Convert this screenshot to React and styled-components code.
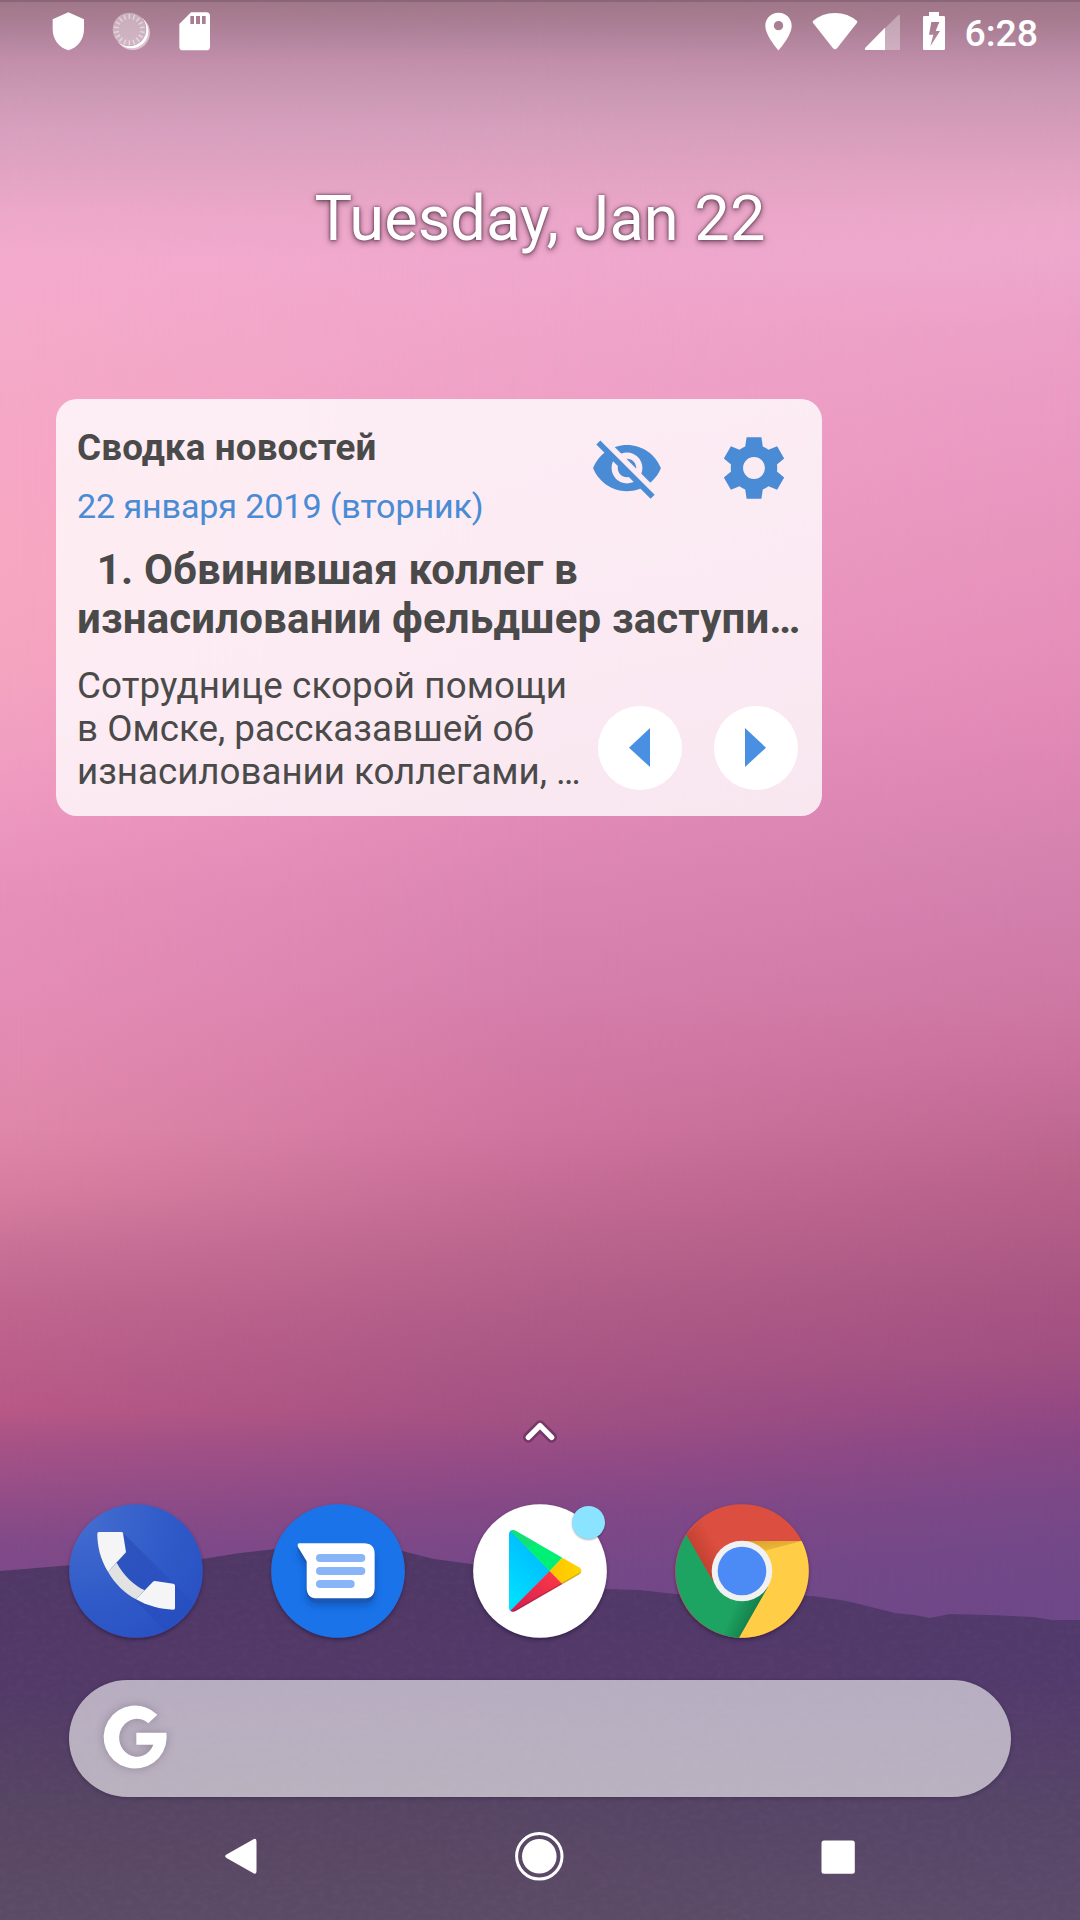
import React from 'react';
import styled, { createGlobalStyle } from 'styled-components';

const GlobalStyle = createGlobalStyle`
  html, body { margin: 0; padding: 0; }
  body { font-family: Roboto, "Noto Sans", sans-serif; overflow: hidden; }
  svg { display: block; flex: none; }
  button { border: 0; padding: 0; background: none; display: flex; align-items: center; justify-content: center; }
`;

const Phone = styled.div`
  display: grid;
  grid-template: 1920px / 1080px;
  width: 1080px;
  height: 1920px;
  overflow: hidden;
`;

const WallpaperArt = styled.svg`
  grid-area: 1 / 1;
`;

const Screen = styled.div`
  grid-area: 1 / 1;
  display: flex;
  flex-direction: column;
  isolation: isolate;
`;

const StatusBar = styled.header`
  display: flex;
  justify-content: space-between;
  align-items: flex-start;
  height: 60px;
  padding: 12px 42px 0 52px;
`;

const StatusGroup = styled.div`
  display: flex;
  align-items: flex-start;
`;

const StatusIcon = styled.svg`
  width: ${(p) => p.$w}px;
  height: 39px;
  margin-right: ${(p) => p.$gap || 0}px;
  fill: #fff;
`;

const Clock = styled.span`
  font-size: 37.5px;
  line-height: 43px;
  font-weight: 500;
  letter-spacing: -0.1px;
  color: #fff;
`;

const DateWidget = styled.h1`
  margin: 109px 0 0;
  text-align: center;
  font-size: 63.2px;
  line-height: 74px;
  font-weight: 400;
  color: #fff;
  text-shadow: 0 0 3px rgba(40, 10, 30, 0.7), 0 2px 6px rgba(40, 10, 30, 0.6);
`;

const NewsCard = styled.section`
  box-sizing: border-box;
  width: 766px;
  height: 417px;
  margin: 144px 0 0 56px;
  padding: 27px 0 0 21px;
  border-radius: 21px;
  background: rgba(255, 255, 255, 0.8);
  color: #4a4a4a;
  white-space: nowrap;
`;

const CardHeader = styled.div`
  display: flex;
  justify-content: space-between;
  padding-right: 31px;
`;

const CardTitle = styled.h2`
  margin: 0 0 17px;
  font-size: 36.75px;
  line-height: 43px;
  font-weight: 700;
  letter-spacing: 0.16px;
`;

const CardDate = styled.p`
  margin: 0;
  font-size: 34.125px;
  line-height: 40px;
  letter-spacing: -0.13px;
  color: #4a8bd5;
`;

const CardTools = styled.div`
  display: flex;
  gap: 53px;
  padding-top: 5px;
`;

const ToolIcon = styled.svg`
  width: 74px;
  height: 74px;
  fill: #4a8bd5;
`;

const Headline = styled.h3`
  margin: 19px 0 21px;
  font-size: 42px;
  line-height: 49px;
  font-weight: 700;
  letter-spacing: 0.16px;
  white-space: pre;
`;

const Indent = styled.span`
  letter-spacing: -0.6px;
`;

const CardFooter = styled.div`
  display: flex;
  justify-content: space-between;
  align-items: flex-end;
  padding-right: 24px;
`;

const Summary = styled.p`
  margin: 0;
  font-size: 36.75px;
  line-height: 43px;
`;

const SummaryLine = styled.span`
  display: block;
  letter-spacing: ${(p) => p.$track || 0}px;
`;

const Pager = styled.div`
  display: flex;
  gap: 32px;
  padding-bottom: 3px;
`;

const PagerButton = styled.button`
  width: 84px;
  height: 84px;
  border-radius: 50%;
  background: #fff;
`;

const DrawerHandle = styled.div`
  display: flex;
  justify-content: center;
  margin-top: auto;
  padding-bottom: 58px;
`;

const Dock = styled.nav`
  display: flex;
  gap: 68px;
  padding-left: 69px;
`;

const AppIcon = styled.div`
  position: relative;
  width: 134px;
  height: 134px;
  border-radius: 50%;
  box-shadow: 0 2px 4px -1px rgba(20, 10, 40, 0.6);
`;

const Badge = styled.span`
  position: absolute;
  left: 98.5px;
  top: 2px;
  width: 33px;
  height: 33px;
  border-radius: 50%;
  background: #8ae3ff;
  box-shadow: 0 1px 2px rgba(0, 0, 0, 0.3);
`;

const SearchBar = styled.div`
  box-sizing: border-box;
  display: flex;
  align-items: center;
  width: 942px;
  height: 117px;
  margin: 42px 0 0 69px;
  padding: 0 0 1px 31px;
  border-radius: 59px;
  background: rgba(255, 255, 255, 0.59);
  box-shadow: 0 1px 4px rgba(20, 10, 40, 0.3);
`;

const GoogleMark = styled.svg`
  filter: drop-shadow(0 0 5px rgba(80, 60, 90, 0.35));
`;

const NavBar = styled.nav`
  box-sizing: border-box;
  display: flex;
  justify-content: center;
  align-items: center;
  gap: 250px;
  height: 123px;
  padding: 0 2px 4px 0;
`;

const NavButton = styled.button`
  width: 49px;
  height: 49px;
`;

const leftSky = [
  [0, '#9f7789'], [20, '#a97d92'], [40, '#b4869f'], [60, '#c28ea9'], [90, '#ca98b3'], [130, '#d7a0be'],
  [170, '#e1a3c1'], [210, '#eca8c9'], [260, '#f3aacd'], [330, '#f4aac9'], [420, '#f5a7c5'], [560, '#f7a7c1'],
  [660, '#f5a4bf'], [740, '#f19fc1'], [820, '#ec97bf'], [900, '#e690b9'], [990, '#e48db6'], [1060, '#e38ab0'],
  [1130, '#df87a9'], [1190, '#d77ea0'], [1250, '#c97096'], [1310, '#bf658e'], [1380, '#b95c88'],
  [1410, '#b85886'], [1440, '#a85386'], [1490, '#964e87'], [1540, '#824a88'], [1620, '#774888'],
];
const middleSky = [
  [0, '#9f7789'], [20, '#a97d92'], [40, '#b4869f'], [60, '#c28ea9'], [90, '#ca98b3'], [130, '#d7a0be'],
  [170, '#e1a3c1'], [210, '#eaa6c8'], [260, '#f0a8ce'], [330, '#f0a4c9'], [420, '#efa0c6'], [560, '#ed9bc3'],
  [700, '#e993bf'], [820, '#e18ab7'], [900, '#db85b2'], [980, '#d680ad'], [1060, '#d379a5'], [1130, '#cf749f'],
  [1180, '#c76d97'], [1240, '#bb668e'], [1310, '#b05d88'], [1370, '#a85685'], [1420, '#a15183'],
  [1460, '#944b86'], [1510, '#834887'], [1570, '#764888'], [1620, '#724888'],
];
const rightSky = [
  [0, '#9f7789'], [20, '#a67b8f'], [40, '#b1849d'], [60, '#be8ca8'], [90, '#c897b2'], [130, '#d69cba'],
  [170, '#e2a2c2'], [215, '#eba8c9'], [260, '#eda7cc'], [330, '#ec9fc6'], [430, '#ea9ac2'], [540, '#e794bd'],
  [640, '#e58fb9'], [720, '#e28ab6'], [770, '#de86b3'], [840, '#d683b0'], [920, '#d17dab'], [1000, '#cd78a3'],
  [1060, '#c9719c'], [1110, '#c16b95'], [1170, '#b9638b'], [1240, '#af5b86'], [1300, '#a75483'],
  [1360, '#9f4f81'], [1400, '#964983'], [1440, '#894785'], [1500, '#7a4887'], [1560, '#714888'], [1620, '#6e4888'],
];

const RIDGE =
  'M0 1571 L48 1567 L72 1565 L130 1563 L202 1559 L240 1553 L275 1549 L300 1545 L340 1541 L380 1544 L406 1552 L434 1559 L472 1564 L540 1577 L606 1589 L640 1590 L675 1594 L740 1594 L813 1596 L847 1601 L875 1608 L895 1613 L915 1615 L930 1618 L950 1614 L990 1615 L1033 1617 L1052 1620 L1080 1620 V1920 H0Z';

function SkyGradient({ id, stops }) {
  return (
    <linearGradient id={id} x1="0" y1="0" x2="0" y2="1620" gradientUnits="userSpaceOnUse">
      {stops.map(([y, c]) => <stop key={y} offset={y / 1620} stopColor={c} />)}
    </linearGradient>
  );
}

function Wallpaper() {
  return (
    <WallpaperArt width="1080" height="1920" viewBox="0 0 1080 1920" aria-hidden="true">
      <defs>
        <SkyGradient id="skyL" stops={leftSky} />
        <SkyGradient id="skyM" stops={middleSky} />
        <SkyGradient id="skyR" stops={rightSky} />
        <linearGradient id="fadeL">
          <stop offset="0" stopColor="#fff" />
          <stop offset="0.25" stopColor="#8c8c8c" />
          <stop offset="0.5" stopColor="#000" />
        </linearGradient>
        <linearGradient id="fadeR">
          <stop offset="0.5" stopColor="#000" />
          <stop offset="1" stopColor="#fff" />
        </linearGradient>
        <mask id="maskL"><rect width="1080" height="1920" fill="url(#fadeL)" /></mask>
        <mask id="maskR"><rect width="1080" height="1920" fill="url(#fadeR)" /></mask>
        <linearGradient id="hill" x1="0" y1="1540" x2="0" y2="1920" gradientUnits="userSpaceOnUse">
          <stop offset="0" stopColor="#4f3765" />
          <stop offset="0.37" stopColor="#523968" />
          <stop offset="0.68" stopColor="#564463" />
          <stop offset="1" stopColor="#5c4b65" />
        </linearGradient>
        <linearGradient id="hillTint">
          <stop offset="0.4" stopColor="#58449a" stopOpacity="0" />
          <stop offset="1" stopColor="#58449a" stopOpacity="0.09" />
        </linearGradient>
        <filter id="grain" x="0" y="0" width="100%" height="100%">
          <feTurbulence type="fractalNoise" baseFrequency="0.12 0.2" numOctaves="3" seed="4" />
          <feColorMatrix values="0 0 0 0 0.6  0 0 0 0 0.42  0 0 0 0 0.7  0.55 0 0 0 -0.2" />
        </filter>
        <clipPath id="hillClip"><path d={RIDGE} /></clipPath>
      </defs>
      <rect width="1080" height="1920" fill="url(#skyM)" />
      <rect width="1080" height="1920" fill="url(#skyL)" mask="url(#maskL)" />
      <rect width="1080" height="1920" fill="url(#skyR)" mask="url(#maskR)" />
      <rect width="1080" height="2" fill="#7d5a6c" opacity="0.6" />
      <path d={RIDGE} fill="url(#hill)" />
      <path d={RIDGE} fill="url(#hillTint)" />
      <g clipPath="url(#hillClip)">
        <rect y="1530" width="1080" height="390" filter="url(#grain)" opacity="0.14" />
      </g>
    </WallpaperArt>
  );
}

function SpinnerTicks() {
  return Array.from({ length: 18 }, (_, i) => (
    <path
      key={i}
      d="M388 42V57"
      stroke="#fff"
      strokeWidth="4.5"
      opacity="0.45"
      transform={`rotate(${i * 20} 388 89)`}
    />
  ));
}

function Status() {
  return (
    <StatusBar>
      <StatusGroup>
        <StatusIcon $w={33} $gap={27} viewBox="156 36 99 117">
          <path d="M205 37 L252 58 V88 C252 118 232 144 205 151 C178 144 158 118 158 88 V58Z" />
        </StatusIcon>
        <StatusIcon $w={38} $gap={29} viewBox="336 36 114 117">
          <mask id="crescent">
            <rect x="330" y="30" width="130" height="130" fill="#fff" />
            <circle cx="388" cy="88" r="51" fill="#000" />
          </mask>
          <circle cx="398" cy="98" r="52" opacity="0.5" mask="url(#crescent)" />
          <circle cx="394" cy="94" r="51" mask="url(#crescent)" />
          <circle cx="388" cy="88" r="50" opacity="0.38" />
          <SpinnerTicks />
        </StatusIcon>
        <StatusIcon $w={31} viewBox="537 36 93 117">
          <path
            fillRule="evenodd"
            d="M573 37 H619 Q630 37 630 48 V140 Q630 151 619 151 H549 Q538 151 538 140 V72Z M571 48 V72 H582 V48Z M588 48 V72 H600 V48Z M606 48 V72 H617 V48Z"
          />
        </StatusIcon>
      </StatusGroup>
      <StatusGroup>
        <StatusIcon $w={27} $gap={20} viewBox="135 36 81 117">
          <path
            fillRule="evenodd"
            d="M175.500 38 C153 38 136 55 136 77 C136 107 175.500 151 175.500 151 C175.500 151 215 107 215 77 C215 55 198 38 175.500 38Z M175.500 63 A14 14 0 1 1 175.500 91 A14 14 0 1 1 175.500 63Z"
          />
        </StatusIcon>
        <StatusIcon $w={46} $gap={6} viewBox="276 36 138 117">
          <path d="M278 64 Q306 39 345 39 Q384 39 412 64 Q412 67 410 70 L351 145 Q345 151 339 145 L280 70 Q278 67 278 64Z" />
        </StatusIcon>
        <StatusIcon $w={36} $gap={22} viewBox="432 36 108 117">
          <path opacity="0.32" d="M495 85 L533 47 Q540 41 540 50 V150 H495Z" />
          <path d="M495 83 V150 H438 Q432 149 436 143Z" />
        </StatusIcon>
        <StatusIcon $w={24} $gap={19} viewBox="606 36 72 117">
          <path
            fillRule="evenodd"
            d="M627 36 H657 V48 H671 Q675 48 675 52 V146 Q675 150 671 150 H613 Q609 150 609 146 V52 Q609 48 613 48 H627Z M634 66 L627 104 H640 L631 139 L660 93 H647 L658 66Z"
          />
        </StatusIcon>
        <Clock>6:28</Clock>
      </StatusGroup>
    </StatusBar>
  );
}

function HideIcon() {
  return (
    <ToolIcon viewBox="0 0 24 24">
      <mask id="slashGap">
        <rect width="24" height="24" fill="#fff" />
        <path d="M0 -0.9 L26 25.100" stroke="#000" strokeWidth="2.67" />
      </mask>
      <path
        mask="url(#slashGap)"
        d="M12 4.500C7 4.500 2.730 7.610 1 12c1.730 4.390 6 7.500 11 7.500s9.270-3.110 11-7.500c-1.730-4.390-6-7.500-11-7.500zM12 17c-2.760 0-5-2.240-5-5s2.240-5 5-5 5 2.240 5 5-2.240 5-5 5zm0-8c-1.660 0-3 1.340-3 3s1.340 3 3 3 3-1.340 3-3-1.340-3-3-3z"
      />
      <path d="M2.700 3.700 L20.300 21.300" stroke="#4a8bd5" strokeWidth="1.850" />
    </ToolIcon>
  );
}

function GearIcon() {
  return (
    <ToolIcon viewBox="0 0 24 24">
      <path
        fillRule="evenodd"
        d="M9.600 2 H14.400 L14.850 5.050 Q15.900 5.450 16.700 6.070 L19.500 4.950 L21.780 8.950 L19.450 10.850 Q19.600 12 19.450 13.150 L21.780 15.050 L19.500 19.050 L16.700 17.930 Q15.900 18.550 14.850 18.950 L14.400 22 H9.600 L9.150 18.950 Q8.100 18.550 7.300 17.930 L4.500 19.050 L2.220 15.050 L4.550 13.150 Q4.400 12 4.550 10.850 L2.220 8.950 L4.500 4.950 L7.300 6.070 Q8.100 5.450 9.150 5.050Z M12 8.450 A3.550 3.550 0 1 0 12 15.550 A3.550 3.550 0 1 0 12 8.450Z"
      />
    </ToolIcon>
  );
}

function News() {
  return (
    <NewsCard>
      <CardHeader>
        <div>
          <CardTitle>Сводка новостей</CardTitle>
          <CardDate>22 января 2019 (вторник)</CardDate>
        </div>
        <CardTools>
          <HideIcon />
          <GearIcon />
        </CardTools>
      </CardHeader>
      <Headline>
        <Indent>{'  '}</Indent>
        {'1. Обвинившая коллег в\nизнасиловании фельдшер заступи…'}
      </Headline>
      <CardFooter>
        <Summary>
          <SummaryLine $track={0.1}>Сотруднице скорой помощи</SummaryLine>
          <SummaryLine>в Омске, рассказавшей об</SummaryLine>
          <SummaryLine $track={-0.03}>изнасиловании коллегами, …</SummaryLine>
        </Summary>
        <Pager>
          <PagerButton aria-label="Назад">
            <svg width="84" height="84" viewBox="0 0 84 84" fill="#4a90e2"><path d="M31 41.700 L52 22 V61Z" /></svg>
          </PagerButton>
          <PagerButton aria-label="Вперёд">
            <svg width="84" height="84" viewBox="0 0 84 84" fill="#4a90e2"><path d="M52 41.700 L31 22 V61Z" /></svg>
          </PagerButton>
        </Pager>
      </CardFooter>
    </NewsCard>
  );
}

function PhoneApp() {
  return (
    <svg width="134" height="134" viewBox="57 312 402 402">
      <defs>
        <radialGradient id="phoneBg" cx="0.12" cy="0.1" r="1">
          <stop offset="0" stopColor="#446dd0" />
          <stop offset="0.6" stopColor="#315bc8" />
          <stop offset="1" stopColor="#2a52c4" />
        </radialGradient>
        <linearGradient id="phoneShade" x1="0" y1="0" x2="1" y2="1">
          <stop offset="0.1" stopColor="#1f3fae" stopOpacity="0.42" />
          <stop offset="0.85" stopColor="#1f3fae" stopOpacity="0.1" />
        </linearGradient>
        <clipPath id="phoneClip"><circle cx="258" cy="513" r="200.500" /></clipPath>
      </defs>
      <circle cx="258" cy="513" r="200.500" fill="url(#phoneBg)" />
      <path clipPath="url(#phoneClip)" fill="url(#phoneShade)" d="M219 398 L460 639 V760 H410 L252 598 L200 488Z" />
      <path fill="#e2e2e2" d="M200 488 C220 525 250 555 284 571 L258 598 C225 580 195 552 174 515Z" />
      <path fill="#f5f5f5" d="M142 401 Q142 396 147 396 H214 Q218 396 219 400 L228 457 L174 515 C150 477 142 436 142 401Z" />
      <path fill="#f5f5f5" d="M258 598 L309 545 Q311 543 315 543 L370 551 Q375 552 375 557 V624 Q375 629 370 629 C332 628 293 618 258 598Z" />
    </svg>
  );
}

function MessagesApp() {
  const bubble = 'M743 435 Q742 430 748 430 H942 Q974 430 974 462 V563 Q974 595 942 595 H802 Q770 595 770 563 V484 L744 441Z';
  return (
    <svg width="134" height="134" viewBox="663 312 402 402">
      <defs>
        <filter id="bubbleBlur" x="-20%" y="-20%" width="140%" height="150%"><feGaussianBlur stdDeviation="11" /></filter>
      </defs>
      <circle cx="864" cy="513" r="200.500" fill="#1a73e9" />
      <path d={bubble} transform="translate(0 22)" fill="#0d3f94" opacity="0.5" filter="url(#bubbleBlur)" />
      <path d={bubble} transform="translate(0 12)" fill="#1a58b4" />
      <path d={bubble} transform="translate(0 6)" fill="#1a58b4" />
      <path d={bubble} fill="#fff" />
      <g fill="#8ab4f8">
        <rect x="798" y="462" width="148" height="24" rx="12" />
        <rect x="798" y="501" width="148" height="24" rx="12" />
        <rect x="798" y="540" width="116" height="24" rx="12" />
      </g>
    </svg>
  );
}

function PlayApp() {
  return (
    <svg width="134" height="134" viewBox="99 312 402 402">
      <defs>
        <linearGradient id="playBlue" x1="0.700" y1="0" x2="0.200" y2="1">
          <stop offset="0" stopColor="#00b4ff" />
          <stop offset="1" stopColor="#00e2ff" />
        </linearGradient>
        <linearGradient id="playRed" x1="1" y1="0" x2="0" y2="1">
          <stop offset="0" stopColor="#ff3a44" />
          <stop offset="1" stopColor="#d11e55" />
        </linearGradient>
        <linearGradient id="playYellow">
          <stop offset="0" stopColor="#ffc400" />
          <stop offset="1" stopColor="#ffd500" />
        </linearGradient>
      </defs>
      <circle cx="300" cy="513" r="200.500" fill="#fff" />
      <path fill="url(#playBlue)" d="M207 401 Q207 395 212 392 L330 513 L212 633 Q207 631 207 624Z" />
      <path fill="#00f076" d="M211 393 Q218 387 228 393 L367 473 L329 513.500Z" />
      <path fill="#24d07c" d="M211 393 Q218 387 228 393 L290 429 L262 444Z" opacity="0.5" />
      <path fill="url(#playYellow)" d="M367 473 L417 502 Q432 513 417 523 L367 552 L329 513Z" />
      <path fill="url(#playRed)" d="M329 513 L367 552 L228 632 Q218 638 211 632Z" />
      <path fill="#000" opacity="0.18" d="M424 515 Q424 520 417 524 L228 633 Q218 638 211 632 Q219 634 228 628 L417 519Z" />
    </svg>
  );
}

function ChromeApp() {
  return (
    <svg width="134" height="134" viewBox="705 312 402 402">
      <defs>
        <linearGradient id="redShade" gradientUnits="userSpaceOnUse" x1="775" y1="480" x2="835" y2="445">
          <stop offset="0" stopColor="#a8321f" stopOpacity="0.5" />
          <stop offset="1" stopColor="#a8321f" stopOpacity="0" />
        </linearGradient>
        <linearGradient id="greenShade" gradientUnits="userSpaceOnUse" x1="940" y1="640" x2="885" y2="615">
          <stop offset="0" stopColor="#0f6a3e" stopOpacity="0.6" />
          <stop offset="1" stopColor="#0f6a3e" stopOpacity="0" />
        </linearGradient>
        <linearGradient id="yellowShade" gradientUnits="userSpaceOnUse" x1="960" y1="423" x2="966" y2="468">
          <stop offset="0" stopColor="#c58a20" stopOpacity="0.6" />
          <stop offset="1" stopColor="#c58a20" stopOpacity="0.200" />
        </linearGradient>
        <clipPath id="chromeClip"><circle cx="906" cy="513" r="200" /></clipPath>
      </defs>
      <circle cx="906" cy="513" r="200.500" fill="#db4e40" />
      <path fill="#1da362" d="M739 404 A200.500 200.500 0 0 0 897 713 L984 565 L906 513 L819 543Z" />
      <path fill="#ffcd46" d="M1085 423 A200.500 200.500 0 0 1 897 713 L984 560 L906 513 V423Z" />
      <g clipPath="url(#chromeClip)">
        <path fill="url(#redShade)" d="M739 404 L825 553 L906 500 L860 400 L790 350Z" />
        <path fill="url(#greenShade)" d="M897 713 L984 560 L900 590 L850 705Z" />
        <path fill="url(#yellowShade)" d="M906 423 H1085 L975 452Z" />
      </g>
      <circle cx="906" cy="513" r="91" fill="#f1f1f1" />
      <circle cx="906" cy="513" r="73" fill="#4c8bf5" />
    </svg>
  );
}

export default function App() {
  return (
    <>
      <GlobalStyle />
      <Phone>
        <Wallpaper />
        <Screen>
          <Status />
          <DateWidget>Tuesday, Jan 22</DateWidget>
          <News />
          <DrawerHandle>
            <svg width="42" height="30" viewBox="237 48 126 90" fill="none" strokeLinecap="round" strokeLinejoin="round">
              <path d="M265 112 L300 77 L335 112" stroke="#3c1440" strokeOpacity="0.4" strokeWidth="32" />
              <path d="M265 112 L300 77 L335 112" stroke="#fff" strokeWidth="16" />
            </svg>
          </DrawerHandle>
          <Dock>
            <AppIcon><PhoneApp /></AppIcon>
            <AppIcon><MessagesApp /></AppIcon>
            <AppIcon><PlayApp /><Badge /></AppIcon>
            <AppIcon><ChromeApp /></AppIcon>
          </Dock>
          <SearchBar>
            <GoogleMark width="70" height="70" viewBox="148 127 210 210">
              <path fill="#fff" d="M320 162 A94.500 94.500 0 1 0 348 232 Q348 224 347 216 H257 V252 H308 A53 57 0 1 1 293 188Z" />
            </GoogleMark>
          </SearchBar>
          <NavBar>
            <NavButton aria-label="Back">
              <svg width="49" height="49" viewBox="0 0 49 49" fill="#fff"><path d="M37.500 7.300 Q40.500 5.700 40.500 9.500 V39 Q40.500 43 37.500 41.300 L10.500 26 Q7.800 24.300 10.500 22.600Z" /></svg>
            </NavButton>
            <NavButton aria-label="Home">
              <svg width="49" height="49" viewBox="0 0 49 49">
                <circle cx="24.300" cy="24.300" r="22.700" fill="none" stroke="#fff" strokeWidth="3" />
                <circle cx="24.300" cy="24.300" r="17.300" fill="#fff" />
              </svg>
            </NavButton>
            <NavButton aria-label="Recents">
              <svg width="49" height="49" viewBox="0 0 49 49"><rect x="7.500" y="8.500" width="33.300" height="33.300" rx="2.500" fill="#fff" /></svg>
            </NavButton>
          </NavBar>
        </Screen>
      </Phone>
    </>
  );
}
